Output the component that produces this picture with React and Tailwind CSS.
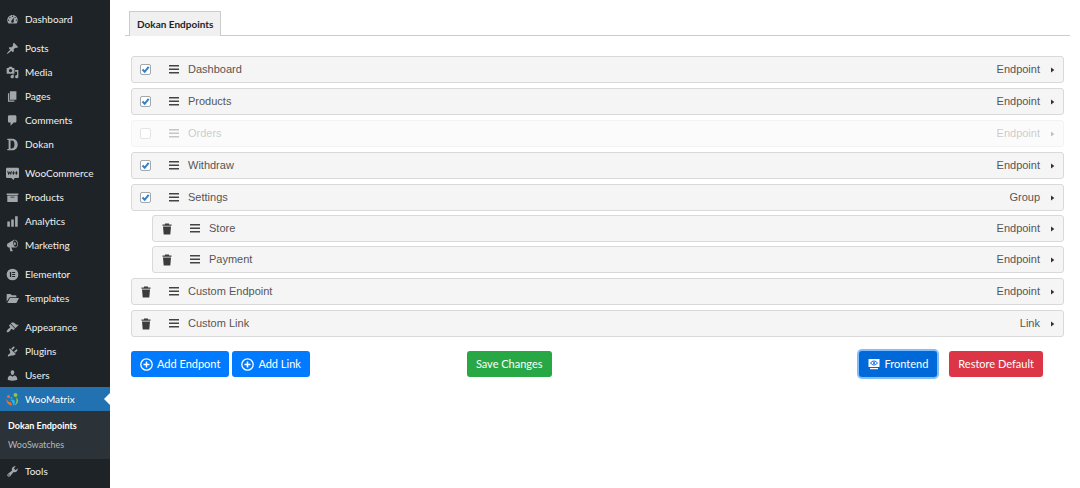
const ICONS = {
  dashboard: "M3.76 16h12.48c1.1-1.37 1.76-3.11 1.76-5 0-4.42-3.58-8-8-8s-8 3.58-8 8c0 1.89.66 3.63 1.76 5zM10 4c.55 0 1 .45 1 1s-.45 1-1 1-1-.45-1-1 .45-1 1-1zM6 6c.55 0 1 .45 1 1s-.45 1-1 1-1-.45-1-1 .45-1 1-1zm8 0c.55 0 1 .45 1 1s-.45 1-1 1-1-.45-1-1 .45-1 1-1zm-5.37 5.55L12 7v6c0 1.1-.9 2-2 2s-2-.9-2-2c0-.57.24-1.08.63-1.45zM4 10c.55 0 1 .45 1 1s-.45 1-1 1-1-.45-1-1 .45-1 1-1zm12 0c.55 0 1 .45 1 1s-.45 1-1 1-1-.45-1-1 .45-1 1-1z",
  pin: "M10.44 3.02l1.82-1.82 6.36 6.35-1.83 1.82c-1.05-.68-2.48-.57-3.41.36l-.75.75c-.92.93-1.04 2.35-.35 3.41l-1.83 1.82-2.41-2.41-2.8 2.79c-.42.42-3.38 2.71-3.8 2.29s1.86-3.39 2.28-3.81l2.79-2.79L4.1 9.36l1.83-1.82c1.05.69 2.48.57 3.4-.36l.75-.75c.93-.92 1.05-2.35.36-3.41z",
  media: "M13 11V4c0-.55-.45-1-1-1h-1.67L9 1H5L3.67 3H2c-.55 0-1 .45-1 1v7c0 .55.45 1 1 1h10c.55 0 1-.45 1-1zM7 4.5c1.38 0 2.5 1.12 2.5 2.5S8.38 9.5 7 9.5 4.5 8.38 4.5 7 5.62 4.5 7 4.5zM14 6h5v10.5c0 1.38-1.12 2.5-2.5 2.5S14 17.88 14 16.5s1.12-2.5 2.5-2.5c.17 0 .34.02.5.05V9h-3V6zm-4 8.05V13h2v3.5c0 1.38-1.12 2.5-2.5 2.5S7 17.88 7 16.5 8.12 14 9.5 14c.17 0 .34.02.5.05z",
  pages: "M6 15V2h10v13H6zm-1 1h8v2H3V5h2v11z",
  comments: "M5 2h9c1.1 0 2 .9 2 2v7c0 1.1-.9 2-2 2h-2l-5 5v-5H5c-1.1 0-2-.9-2-2V4c0-1.1.9-2 2-2z",
  dokan: "M2 1h7c6 0 9 4 9 9s-3 9-9 9H2v-2h2V3H2zM7 4v12h2c3 0 4-2.500 4-6s-1-6-4-6z",
  woo: "M2 1h16c1.100 0 2 .9 2 2v12c0 1.100-.9 2-2 2h-5l-1 3-4-3H2c-1.100 0-2-.9-2-2V3c0-1.100.9-2 2-2zM2 6l1.500 6h1L6 9l1 3h1l1-6H8L7.500 9 6.500 7h-1L4.500 9 3 6zM11.500 6.500a1.500 2.700 0 1 0 .01 0zM16 6.500a1.500 2.700 0 1 0 .01 0z",
  products: "M19 4v2H1V4h18zM2 7h16v10H2V7zm11 3V9H7v1h6z",
  analytics: "M18 18V2h-4v16h4zm-6 0V7H8v11h4zm-6 0v-8H2v8h4z",
  marketing: "M18.15 5.94c.46 1.62.38 3.22-.02 4.48-.42 1.28-1.26 2.18-2.3 2.48-.16.06-.26.06-.4.06-.06.02-.12.02-.18.02-.06.02-.14.02-.22.02h-6.8l2.22 5.5c.02.14-.06.26-.14.34-.08.1-.24.16-.34.16H6.95c-.1 0-.26-.06-.34-.16-.08-.08-.16-.2-.14-.34l-1-5.5H4.25l-.02-.02c-.5.06-1.08-.18-1.54-.62s-.88-1.08-1.06-1.88c-.24-.8-.2-1.56-.02-2.2.18-.62.58-1.08 1.06-1.3l.02-.02 9-5.4c.1-.06.18-.1.24-.16.06-.04.14-.08.24-.12.16-.08.28-.12.5-.18 1.04-.3 2.24.1 3.22.98s1.84 2.24 2.26 3.86zm-2.58 5.98h-.02c.4-.1.74-.34 1.04-.7.58-.7.86-1.76.86-3.04 0-.64-.1-1.3-.28-1.98-.34-1.36-1.02-2.5-1.78-3.24s-1.68-1.1-2.46-.88c-.82.22-1.4.96-1.7 2-.32 1.04-.28 2.36.06 3.72.38 1.36 1 2.5 1.8 3.24.78.74 1.62 1.1 2.48.88zm-2.54-7.08c.22-.04.42-.02.62.04.38.16.76.48 1.02 1s.42 1.2.42 1.78c0 .3-.04.56-.12.8-.18.48-.44.84-.86.94-.34.1-.8-.06-1.14-.4s-.64-.86-.78-1.5c-.18-.62-.12-1.24.02-1.72s.48-.84.82-.94z",
  elementor: "M10 1a9 9 0 1 0 0 18a9 9 0 1 0 0-18zM6 6h2v8H6zM9.500 6H14v1.700H9.500zM9.500 9.200H14v1.700H9.500zM9.500 12.300H14V14H9.500z",
  templates: "M1 15V4c0-.6.4-1 1-1h5l2 2h6c.6 0 1 .4 1 1v2H6.500c-.8 0-1.500.4-1.900 1.100zM2 17l3.700-7c.2-.4.500-.6 1-.6H20l-3.800 7c-.2.4-.500.6-1 .6z",
  appearance: "M14.48 11.06L7.41 3.99l1.5-1.5c.5-.56 2.3-.47 3.51.32 1.21.8 1.43 1.28 2.91 2.1 1.18.64 2.45 1.26 4.45.85zm-.71.71L6.7 4.7 4.93 6.47c-.39.39-.39 1.02 0 1.41l1.06 1.06c.39.39.39 1.03 0 1.42-.6.6-1.43 1.11-2.21 1.69-.35.26-.7.53-1.01.84C1.43 14.23.4 16.08 1.4 17.07c.99 1 2.84-.03 4.18-1.36.31-.31.58-.66.85-1.02.57-.78 1.08-1.61 1.69-2.21.39-.39 1.02-.39 1.41 0l1.06 1.06c.39.39 1.02.39 1.41 0z",
  plugins: "M13.11 4.36L9.87 7.6 8 5.73l3.24-3.24c.35-.34 1.05-.2 1.56.32.52.51.66 1.21.31 1.55zm-8 1.77l.91-1.12 9.01 9.01-1.19.84c-.71.71-2.63 1.16-3.82 1.16H8.14L4.9 17.26c-.49.49-1.27.49-1.76 0s-.49-1.27 0-1.76l3.24-3.24v-1.94c0-1.19-1.98-3.48-1.27-4.19zm7.26 3.97l3.24-3.24c.34-.35 1.04-.21 1.55.31.52.51.66 1.21.31 1.55l-3.24 3.25z",
  users: "M10 9.25c-2.27 0-2.73-3.44-2.73-3.44C7 4.02 7.82 2 9.97 2c2.16 0 2.98 2.02 2.71 3.81 0 0-.41 3.44-2.68 3.44zm0 2.57L12.72 10c2.39 0 4.52 2.33 4.52 4.53v2.49s-3.65 1.13-7.24 1.13c-3.65 0-7.24-1.13-7.24-1.13v-2.49c0-2.25 1.94-4.48 4.47-4.48z",
  tools: "M16.68 9.77c-1.34 1.34-3.3 1.67-4.95.99l-5.41 6.52c-.99.99-2.59.99-3.58 0s-.99-2.59 0-3.57l6.52-5.42c-.68-1.65-.35-3.61.99-4.95 1.28-1.28 3.12-1.62 4.72-1.06l-2.89 2.89 2.82 2.82 2.86-2.87c.53 1.58.18 3.39-1.08 4.65zM3.81 16.21c.4.39 1.04.39 1.43 0 .4-.4.4-1.04 0-1.43-.39-.4-1.03-.4-1.43 0-.39.39-.39 1.03 0 1.43z",
};

const MENU_GROUPS = [
  [{ label: "Dashboard", icon: "dashboard" }],
  [
    { label: "Posts", icon: "pin" },
    { label: "Media", icon: "media" },
    { label: "Pages", icon: "pages" },
    { label: "Comments", icon: "comments" },
    { label: "Dokan", icon: "dokan" },
  ],
  [
    { label: "WooCommerce", icon: "woo" },
    { label: "Products", icon: "products" },
    { label: "Analytics", icon: "analytics" },
    { label: "Marketing", icon: "marketing" },
  ],
  [
    { label: "Elementor", icon: "elementor" },
    { label: "Templates", icon: "templates" },
  ],
  [
    { label: "Appearance", icon: "appearance" },
    { label: "Plugins", icon: "plugins" },
    { label: "Users", icon: "users" },
    { label: "WooMatrix", active: true, children: ["Dokan Endpoints", "WooSwatches"] },
    { label: "Tools", icon: "tools" },
  ],
];

const ENDPOINTS = [
  { label: "Dashboard", type: "Endpoint", checked: true },
  { label: "Products", type: "Endpoint", checked: true },
  { label: "Orders", type: "Endpoint", checked: false },
  { label: "Withdraw", type: "Endpoint", checked: true },
  {
    label: "Settings",
    type: "Group",
    checked: true,
    children: [
      { label: "Store", type: "Endpoint", custom: true },
      { label: "Payment", type: "Endpoint", custom: true },
    ],
  },
  { label: "Custom Endpoint", type: "Endpoint", custom: true },
  { label: "Custom Link", type: "Link", custom: true },
];

function MenuIcon({ name }) {
  return (
    <svg viewBox="0 0 20 20" className="size-[13px] shrink-0 fill-[#a2a7ac]" aria-hidden="true">
      <path fillRule="evenodd" d={ICONS[name]} />
    </svg>
  );
}

function MatrixLogo() {
  return (
    <svg viewBox="0 0 26 26" className="size-[13px] shrink-0" aria-hidden="true">
      <circle cx="5" cy="7" r="3" fill="#f36f21" />
      <path d="M1 11c1 5 4 7 9 8l2 6C5 25 0 19 1 11z" fill="#f36f21" />
      <circle cx="19" cy="4" r="4" fill="#8dc63f" />
      <path d="M20 9c6 3 6 12-3 16 4-5 5-10 3-16z" fill="#8dc63f" />
      <circle cx="11" cy="10" r="2" fill="#27b4e8" />
      <path d="M9 14c4-3 9 0 9 4 0 3-2 6-4 7 0-4-1-8-5-11z" fill="#27b4e8" />
    </svg>
  );
}

function MenuItem({ item }) {
  return (
    <li>
      <a
        href="#"
        className={`relative flex h-6 items-center gap-[6px] pl-[6px] ${item.active ? "bg-[#2271b1] text-white" : "text-[#f0f0f1]"}`}
      >
        {item.active ? <MatrixLogo /> : <MenuIcon name={item.icon} />}
        {item.label}
        {item.active && (
          <span className="absolute top-1/2 right-0 -translate-y-1/2 border-y-6 border-r-6 border-y-transparent border-r-white" />
        )}
      </a>
      {item.children && (
        <ul className="bg-[#2c3338] py-[5px] pl-2 text-[9px]">
          {item.children.map((child, i) => (
            <li key={child}>
              <a href="#" className={`flex h-[19px] items-center ${i === 0 ? "font-bold text-white" : "text-[#b4b9be]"}`}>
                {child}
              </a>
            </li>
          ))}
        </ul>
      )}
    </li>
  );
}

function Sidebar() {
  return (
    <nav className="flex min-h-screen w-[110px] shrink-0 flex-col gap-[5px] bg-[#1d2327] pt-[7px] text-[10px]">
      {MENU_GROUPS.map((group, i) => (
        <ul key={i}>
          {group.map((item) => (
            <MenuItem key={item.label} item={item} />
          ))}
        </ul>
      ))}
    </nav>
  );
}

function TrashIcon() {
  return (
    <svg viewBox="0 0 10 12" className="h-3 w-[10px] fill-[#3c3c3c]" aria-hidden="true">
      <path d="M3 1.500V.500h4v1h2.500v1.300H.500V1.500zM1 3.500h8L8.300 11.500H1.700z" />
    </svg>
  );
}

function EndpointRow({ item }) {
  const disabled = item.checked === false;
  return (
    <div
      className={`flex h-[27px] items-center rounded-[3px] border border-[#d9d9d9] bg-[#f5f5f5] px-2 ${disabled ? "opacity-30" : ""}`}
    >
      <div className="flex w-[29px] items-center">
        {item.custom ? (
          <button type="button" aria-label={`Delete ${item.label}`} className="ml-px">
            <TrashIcon />
          </button>
        ) : (
          <span className="relative flex">
            <input
              type="checkbox"
              defaultChecked={item.checked}
              aria-label={item.label}
              className="peer size-[11px] appearance-none rounded-[2px] border border-[#a5a8ab] bg-white"
            />
            <svg
              viewBox="0 0 11 11"
              className="pointer-events-none absolute inset-0 hidden size-[11px] fill-none stroke-[#3582c4] stroke-2 peer-checked:block"
              aria-hidden="true"
            >
              <path d="M2.500 5.500l2.200 2.300L8.700 2.800" />
            </svg>
          </span>
        )}
      </div>
      <svg viewBox="0 0 10 9" className="h-[9px] w-[10px] fill-[#444]" aria-hidden="true">
        <path d="M0 0h10v1.400H0zM0 3.500h10v1.400H0zM0 7h10v1.400H0z" />
      </svg>
      <span className="ml-[9px] flex-1">{item.label}</span>
      <span>{item.type}</span>
      <button type="button" aria-label={`Expand ${item.label}`} className="ml-[11px]">
        <svg viewBox="0 0 4 6" className="h-[6px] w-1 fill-[#333]" aria-hidden="true">
          <path d="M0 .500l3.300 2.500L0 5.500z" />
        </svg>
      </button>
    </div>
  );
}

function EndpointList() {
  return (
    <ul className="flex flex-col gap-[5px] font-['Liberation_Sans',Arial,sans-serif] text-[11px] text-[#555]">
      {ENDPOINTS.map((item) => (
        <li key={item.label}>
          <EndpointRow item={item} />
          {item.children && (
            <ul className="mt-1 ml-[21px] flex flex-col gap-1">
              {item.children.map((child) => (
                <li key={child.label}>
                  <EndpointRow item={child} />
                </li>
              ))}
            </ul>
          )}
        </li>
      ))}
    </ul>
  );
}

function ActionButton({ className, children }) {
  return (
    <button type="button" className={`flex h-[26px] items-center gap-1 rounded-[3px] px-[9px] text-white ${className}`}>
      {children}
    </button>
  );
}

function PlusCircle() {
  return (
    <svg viewBox="0 0 13 13" className="size-[13px] fill-none stroke-white" aria-hidden="true">
      <circle cx="6.500" cy="6.500" r="5.700" strokeWidth="1.300" />
      <path d="M6.500 3.500v6M3.500 6.500h6" strokeWidth="1.500" />
    </svg>
  );
}

function ScreenIcon() {
  return (
    <svg viewBox="0 0 12 12" className="size-3" aria-hidden="true">
      <path fill="#fff" d="M.500 1h11v8H.500zM2 10h8v1.200H2z" />
      <path fill="none" stroke="#0069d9" d="M2.500 5c2-2.600 5-2.600 7 0-2 2.600-5 2.600-7 0z" />
      <circle cx="6" cy="5" r="1" fill="#0069d9" />
    </svg>
  );
}

function Actions() {
  return (
    <div className="mt-[14px] grid grid-cols-[36%_1fr_auto] text-[11px]">
      <div className="flex gap-[3px]">
        <ActionButton className="bg-[#007bff]">
          <PlusCircle />
          Add Endpont
        </ActionButton>
        <ActionButton className="bg-[#007bff]">
          <PlusCircle />
          Add Link
        </ActionButton>
      </div>
      <ActionButton className="justify-self-start bg-[#28a745]">Save Changes</ActionButton>
      <div className="mr-[21px] flex gap-3">
        <ActionButton className="bg-[#0069d9] ring-2 ring-[#80bdff]">
          <ScreenIcon />
          Frontend
        </ActionButton>
        <ActionButton className="bg-[#dc3545]">Restore Default</ActionButton>
      </div>
    </div>
  );
}

export default function App() {
  return (
    <div className="flex min-h-screen bg-white font-[Lato,'Open_Sans',sans-serif]">
      <Sidebar />
      <main className="min-w-0 flex-1 pt-[11px] pr-[10px] pl-[15px]">
        <div role="tablist" className="flex border-b border-[#ccc] pl-1">
          <button
            type="button"
            role="tab"
            aria-selected="true"
            className="-mb-px h-[25px] border border-b-0 border-[#ccc] bg-[#f0f0f1] px-[7px] text-[10px] font-bold text-[#1d2327]"
          >
            Dokan Endpoints
          </button>
        </div>
        <div className="px-[6px] pt-5">
          <EndpointList />
          <Actions />
        </div>
      </main>
    </div>
  );
}
